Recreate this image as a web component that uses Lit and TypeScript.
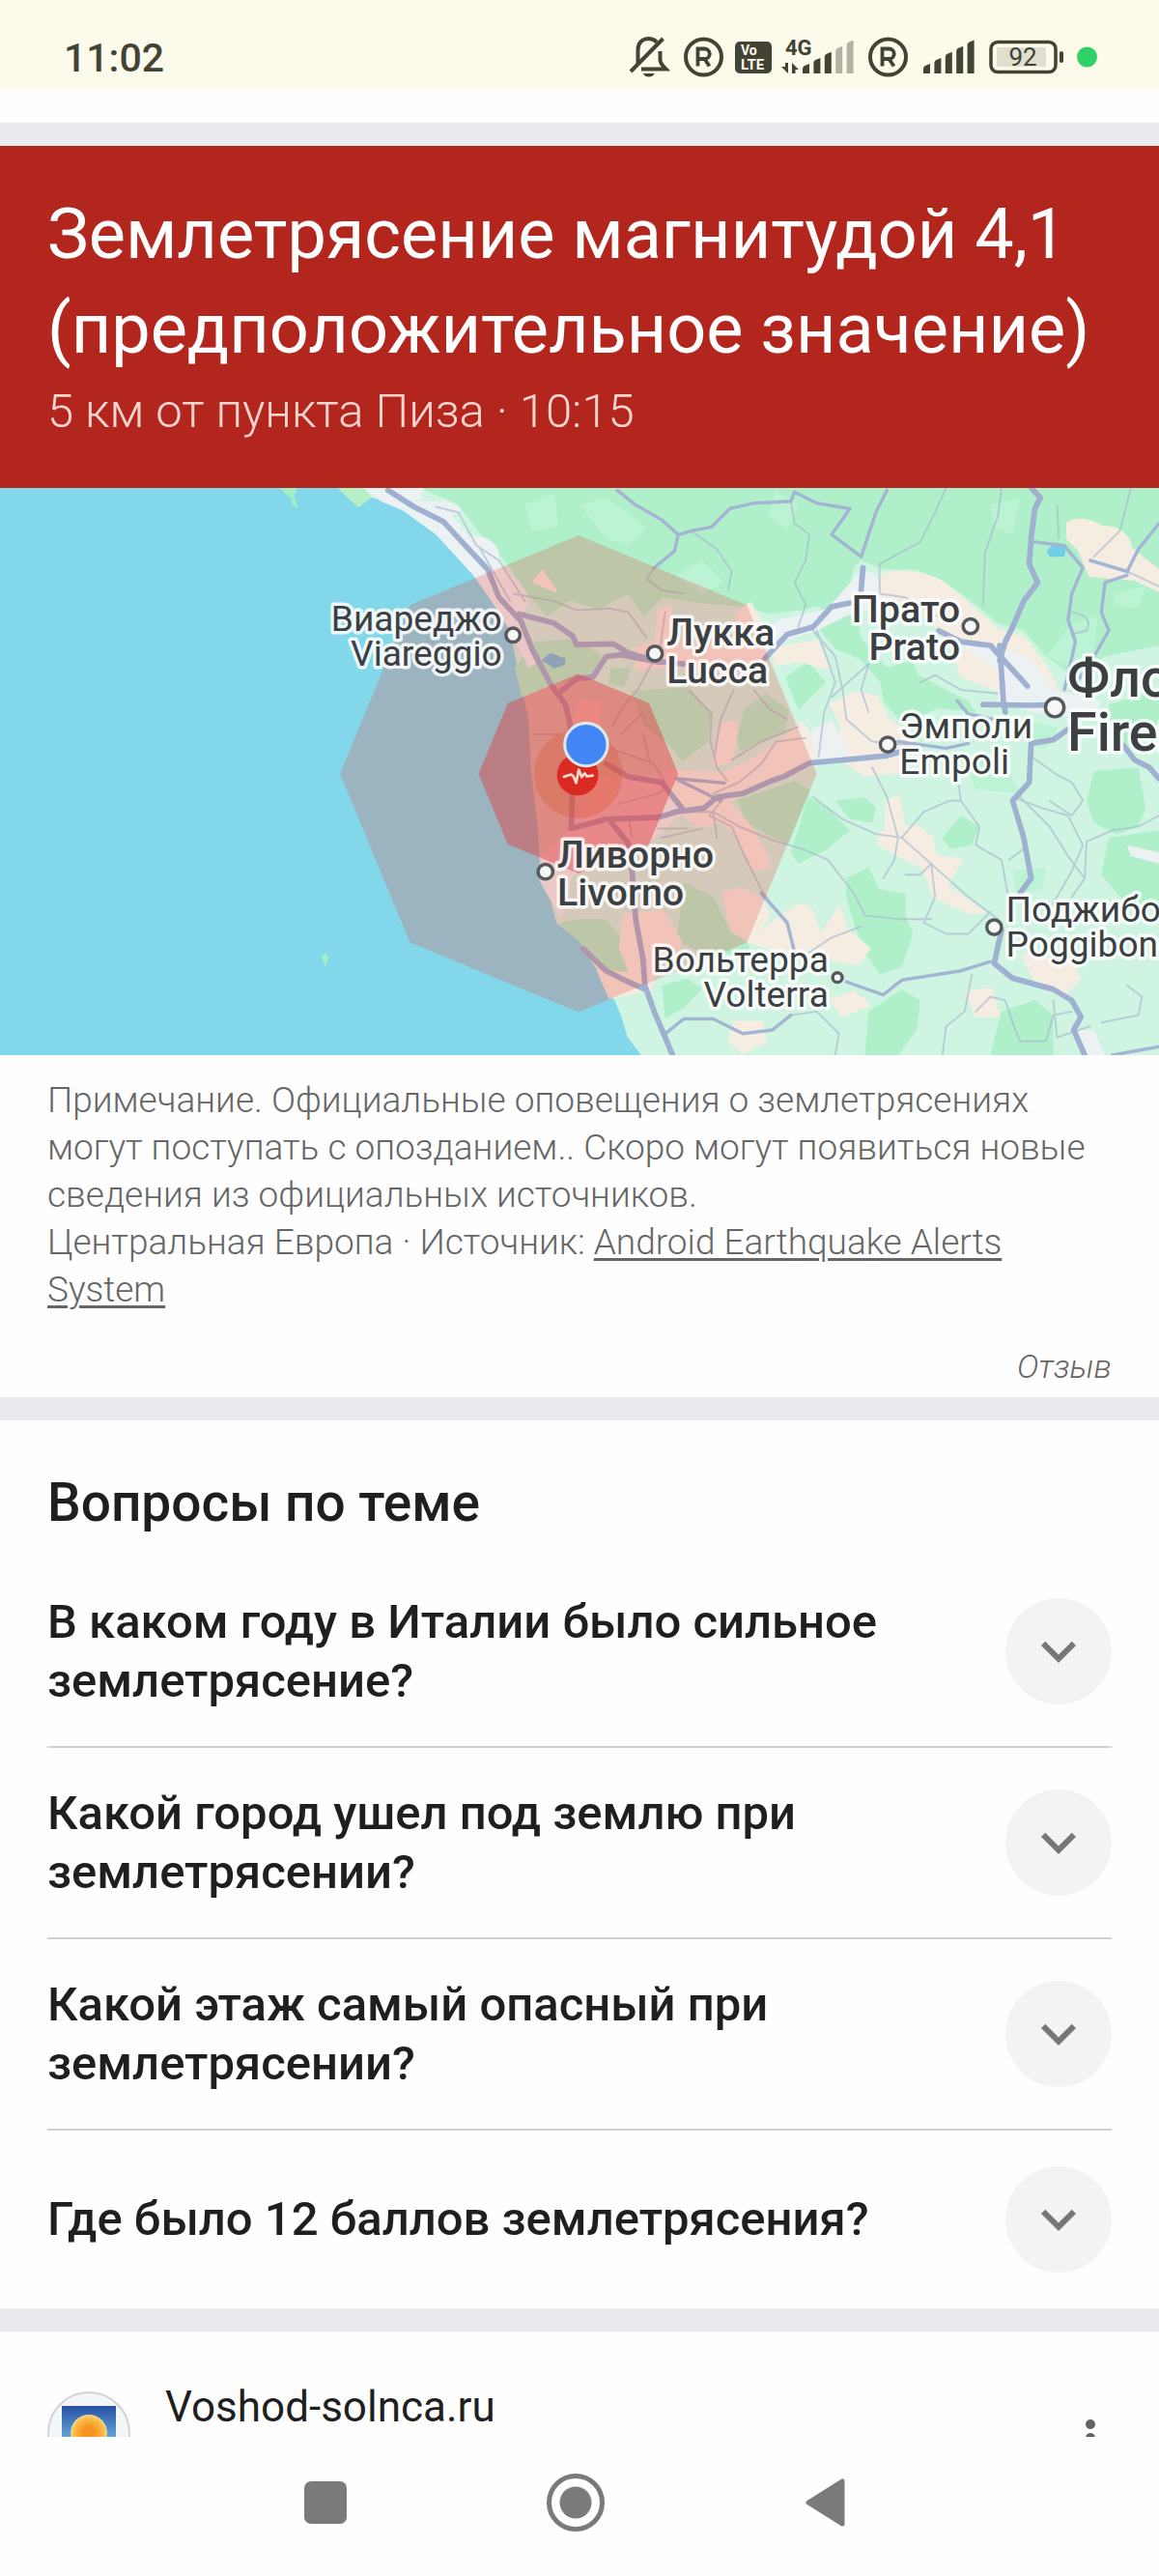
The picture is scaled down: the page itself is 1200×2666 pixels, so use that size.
import { LitElement, html, svg, css } from "lit";
import { customElement, property, state } from "lit/decorators.js";

/* ---------- Status bar ---------- */

@customElement("status-bar")
class StatusBar extends LitElement {
  static styles = css`
    :host {
      display: flex;
      align-items: center;
      justify-content: space-between;
      height: 93px;
      padding: 23px 64px 0 66px;
      box-sizing: border-box;
      background: #fcfaeb;
      color: #424235;
      font-family: Roboto, "Liberation Sans", sans-serif;
    }
    .time {
      padding-top: 3px;
      font-size: 41px;
      line-height: 48px;
      font-weight: 500;
    }
    .icons {
      display: flex;
      align-items: center;
    }
    .tray {
      display: block;
      width: 486px;
      height: 48px;
    }
  `;

  private roaming(cx: number) {
    return svg`
      <circle cx=${cx} cy="24" r="18.5" fill="none" stroke="#424235" stroke-width="4" />
      <path d="M${cx - 6} 33.500V15.500H${cx + 1}A5 5 0 0 1 ${cx + 1} 26H${cx - 6}M${cx + 1} 26L${cx + 6} 33.500"
        fill="none" stroke="#424235" stroke-width="3.800" />`;
  }

  private bars(x: number, faded: number) {
    return [0, 1, 2, 3, 4].map((i) => {
      const left = x + i * 11.4;
      const top = 32 - i * 6.1;
      return svg`<path d="M${left} ${top + 4}Q${left} ${top + 2} ${left + 2} ${top + 1}L${left + 7} ${top - 1}V41H${left}Z"
        fill=${i >= 5 - faded ? "#b3b2a5" : "#424235"} />`;
    });
  }

  render() {
    return html`
      <span class="time">11:02</span>
      <span class="icons">
        <svg class="tray" viewBox="650 -1 486 48" aria-hidden="true">
          <g fill="none" stroke="#424235" stroke-width="4">
            <path d="M660.500 31V16.500C660.500 9 665.500 5 671.500 5C675 5 678 6.500 680 8.500" />
            <path d="M683.500 18V27C683.500 31 688 35 689.500 36.500H664" />
            <path d="M653 39L686.500 5" />
          </g>
          <path d="M666 41H677.500A6 5 0 0 1 666 41Z" fill="#424235" />
          ${this.roaming(728.5)}
          <rect x="761" y="8" width="38" height="33" rx="5" fill="#424235" />
          <g fill="#fcfaeb" font-family="Roboto, sans-serif" font-weight="700">
            <text x="767" y="21.500" font-size="14">Vo</text>
            <text x="767" y="36.500" font-size="15">LTE</text>
          </g>
          <text x="813" y="22" font-size="22" font-weight="700" fill="#424235" font-family="Roboto, sans-serif">4G</text>
          <path d="M813 30L816 30V41L809 34H813ZM820 30V41H823.500V37L827 37Z" fill="#424235" />
          ${this.bars(831, 2)} ${this.roaming(919.5)} ${this.bars(956, 0)}
          <rect x="1026" y="8.500" width="67" height="31" rx="7" fill="none" stroke="#424235" stroke-width="3.500" />
          <rect x="1032" y="14" width="51" height="20" rx="1" fill="#dfdecf" />
          <rect x="1097" y="18" width="4" height="12" rx="2" fill="#424235" />
          <text x="1059" y="33" font-size="26" text-anchor="middle" fill="#424235" font-family="Roboto, sans-serif">92</text>
          <circle cx="1125.500" cy="24" r="10.500" fill="#2fd267" />
        </svg>
      </span>
    `;
  }
}

/* ---------- Map ---------- */

type Place = {
  ru: string;
  local: string;
  x: number;
  y: number;
  end?: boolean;
  size: number;
  weight: number;
  step: number;
  dot: [number, number, number];
};

const PLACES: Place[] = [
  { ru: "Виареджо", local: "Viareggio", x: 1358, y: 400, end: true, size: 97, weight: 400, step: 94, dot: [1388, 412, 19] },
  { ru: "Лукка", local: "Lucca", x: 1804, y: 440, size: 103, weight: 500, step: 103, dot: [1772, 462, 20] },
  { ru: "Прато", local: "Prato", x: 2598, y: 376, end: true, size: 103, weight: 500, step: 104, dot: [2626, 388, 20] },
  { ru: "Флоренция", local: "Firenze", x: 2888, y: 578, size: 145, weight: 500, step: 146, dot: [2854, 608, 25] },
  { ru: "Эмполи", local: "Empoli", x: 2434, y: 692, size: 97, weight: 400, step: 96, dot: [2402, 708, 20] },
  { ru: "Ливорно", local: "Livorno", x: 1508, y: 1040, size: 103, weight: 500, step: 102, dot: [1476, 1052, 20] },
  { ru: "Вольтерра", local: "Volterra", x: 2242, y: 1324, end: true, size: 97, weight: 400, step: 94, dot: [2266, 1338, 13] },
  { ru: "Поджибонси", local: "Poggibonsi", x: 2722, y: 1188, size: 97, weight: 400, step: 94, dot: [2690, 1202, 20] },
];

const LAND =
  "M915 14L925 25L970 66L1005 40L1050 50L1100 80L1180 140L1230 190L1280 245L1330 320L1380 400L1400 500L1415 570L1430 640L1437 780L1455 930L1460 1020L1462 1080L1490 1130L1505 1190L1568 1240L1628 1340L1663 1400L1680 1440L1698 1500L1735 1548H3136V14Z";

const FOREST = [
  "M1140 14L1240 60L1300 140L1370 215L1428 300L1480 361L1541 318L1620 344L1698 300L1742 361L1794 309L1898 326L2020 335L2080 355L2160 345L2240 330L2300 290L2310 230L2330 210L2390 235L2480 235L2560 270L2640 330L2700 380L2770 400L2830 470L2900 520L2990 470L3136 440V14Z",
  "M2220 330L2310 320L2330 420L2400 500L2470 480L2500 560L2440 600L2400 560L2330 480L2260 450L2220 400Z",
  "M2380 520L2450 500L2560 560L2620 590L2640 620L2540 610L2440 650L2390 590Z",
  "M2190 850L2240 880L2300 940L2240 990L2160 1030L2140 1000L2180 870Z",
  "M2260 860L2340 850L2370 880L2360 920L2300 910Z",
  "M1510 1190L1568 1180L1640 1180L1680 1230L1700 1330L1730 1380L1660 1330L1568 1240Z",
  "M1850 1080L1930 1120L1970 1200L2020 1240L2040 1280L1900 1270L1830 1240Z",
  "M2290 1070L2350 1040L2380 1100L2450 1110L2450 1170L2470 1220L2440 1310L2380 1330L2340 1270L2310 1190L2290 1120Z",
  "M2550 960L2600 900L2650 930L2630 980L2570 990Z",
  "M2960 780L3080 770L3100 880L3080 930L3020 950L2960 920L2940 860Z",
  "M3000 960L3136 940V1150L3040 1130L2980 1060Z",
  "M2350 1430L2440 1370L2490 1400L2480 1480L2430 1548H2340Z",
  "M2710 1430L2800 1400L2850 1440L2850 1548H2680Z",
  "M1790 1360L1860 1340L1900 1370L1850 1420L1800 1450Z",
  "M3000 600L3136 560V700L3070 720L3010 680Z",
  "M1445 430L1550 422L1628 466L1602 527L1498 544L1411 579L1393 501Z",
  "M1655 501L1707 501L1690 553L1646 544Z",
  "M1707 562L1864 553L1925 623L1916 701L1846 753L1811 710L1742 658Z",
  "M2012 614L2073 570L2134 614L2125 675L2003 727L1994 692Z",
  "M1994 858L2151 806L2195 832L2170 890L2134 980L2081 954L2020 919Z",
  "M2125 527L2186 483L2235 540L2160 614Z",
];

const SLOPES = [
  "M1568 60L1640 40L1750 120L1700 170L1640 150Z",
  "M1830 250L1900 210L1960 270L1900 300Z",
  "M2100 20L2160 60L2130 130L2080 90Z",
  "M1420 60L1500 30L1510 120L1440 130Z",
  "M2680 60L2760 40L2740 140L2690 120Z",
  "M3010 300L3100 280L3080 340L3020 330Z",
  "M2830 470L2900 380L2970 360L2960 460L2900 500Z",
  "M2760 640L2860 660L2850 700L2820 720L2780 700Z",
  "M2740 1050L2830 1040L2820 1100L2750 1110Z",
  "M2600 740L2720 760L2760 840L2640 830Z",
];

const BEIGE = [
  "M2890 110Q2930 90 2980 120Q3050 120 3060 180L3136 240V290L3070 260L2950 250L2920 180L2890 150Z",
  "M2385 250Q2470 230 2550 270L2620 330L2700 400L2770 420L2830 500L2860 560L2800 590L2700 560L2600 520L2580 440L2480 330L2380 310Z",
  "M2090 450L2210 430L2240 500L2160 480L2100 490Z",
  "M2250 600L2310 570L2370 580L2400 640L2460 680L2440 780L2340 790L2270 740L2280 660Z",
  "M2380 950L2480 930L2520 960L2530 1010L2600 1020L2560 1090L2660 1160L2620 1160L2530 1120L2500 1040L2440 1010L2380 980Z",
  "M2400 860L2430 850L2450 960L2400 960Z",
  "M1960 1110L2010 1100L2060 1130L2080 1170L2030 1240L1980 1210Z",
  "M2120 1170Q2180 1120 2200 1170L2220 1230L2270 1150L2290 1210L2350 1260L2320 1300L2260 1290L2200 1260L2120 1270L2030 1240Z",
  "M1690 1170L1790 1160L1840 1240L1830 1290L1770 1300L1760 1370L1650 1390L1620 1320L1710 1330L1680 1260Z",
  "M2620 1380L2680 1370L2700 1440L2640 1440Z",
  "M2770 1280L2900 1300L2920 1340L2880 1380L2800 1340Z",
  "M1990 1460L2060 1460L2070 1510L2010 1540L1975 1510Z",
  "M2250 1400L2310 1380L2350 1410L2280 1440Z",
  "M1951 658Q1977 640 1994 658L1977 753L1933 762Z",
  "M2020 762L2125 692L2168 649L2203 701L2203 753L2090 797L1994 840L1968 867L2020 919L2064 989L2081 1041L2038 1041L2003 962L1951 910L1898 928L1846 893L1811 780L1951 788Z",
  "M1568 588L1620 597L1620 658L1550 658Z",
  "M1785 344L1811 335L1820 431L2073 440L2064 483L1724 501L1724 449L1776 431Z",
  "M1446 266L1467 241L1502 292Z",
  "M1994 357L2029 327L2073 405L2020 400Z",
];

const URBAN = [
  "M985 14H1145L1140 45L1100 50L1180 50Q1240 50 1245 75L1225 90L1270 145Q1330 140 1350 185L1350 210L1420 290L1430 330L1400 370L1450 490L1430 500L1380 400L1330 320L1280 250L1180 140L1090 75L1030 50Z",
  "M2300 270Q2330 220 2375 255L2390 330L2290 360L2210 400L2080 440L2060 400L2110 370L2240 340Z",
  "M2560 420L2700 440L2790 480L2850 560L2980 590L2960 640L2790 620L2700 590L2700 510L2600 440Z",
  "M1550 780L1707 797L1811 780L1846 893L1776 960L1670 1020L1550 1060L1520 1180L1490 1130L1462 1080L1462 1010L1540 940Z",
  "M2910 1480L2960 1480L2990 1548H2930Z",
  "M3050 980L3136 1000V1030L3060 1010Z",
  "M2195 670L2250 640L2280 700L2300 740L2210 750Z",
];

const MAJOR_ROADS = [
  "M1050 20L1120 65L1200 105L1250 160L1320 235L1350 310L1410 375L1440 450L1490 545L1530 600L1542 650L1555 760L1548 860L1546 930",
  "M1405 355L1500 380L1550 415L1560 438L1660 436L1700 460L1780 484",
  "M1510 570L1560 530L1605 525L1640 470L1680 465L1780 484L1850 490",
  "M1545 935L1640 910L1780 905L1830 890L1905 880L1940 850L2010 840L2090 805L2120 795L2190 758L2300 748L2400 738L2460 720",
  "M1640 760L1700 795L1790 810L1845 880",
  "M1655 920L1700 975L1710 1050L1720 1180L1740 1290L1745 1360L1770 1430L1820 1548",
  "M1578 1260L1640 1320L1700 1350L1745 1370",
  "M2070 475L2130 410L2200 390L2250 335L2300 325",
  "M2330 290L2335 230",
  "M2540 400L2600 430L2680 440L2780 550",
  "M2705 440L2715 590L2720 620",
  "M2790 14L2815 40L2800 70L2790 150L2785 220L2808 270L2770 320L2740 390L2720 430L2705 480",
  "M2660 600L2790 602L2860 600",
  "M2900 660L2850 695L2790 705L2785 810L2740 860L2770 960L2790 1070L2760 1110",
  "M2710 1210L2690 1300L2740 1340L2850 1370L2900 1400L2925 1445L2905 1480L2935 1548",
  "M3040 710L3070 750L3110 770L3136 800",
];

const SECONDARY_ROADS = [
  "M1670 20L1720 60L1790 100L1835 140L1825 185L1770 230",
  "M1840 140L1870 130L1925 120L1975 70L2040 55L2140 50L2150 25L2210 55L2300 70L2250 140L2330 200",
  "M2330 200L2350 140L2370 80L2400 20",
  "M2800 160L2880 170L2930 230L2900 300L2890 370L2910 430L2880 560",
  "M2950 210L3050 240L3080 180L3136 110",
  "M3050 250L2990 270L2980 350L3000 400L2960 470L2900 560",
  "M2590 590L2620 625L2690 640M2430 700L2560 718L2620 705",
  "M2290 1350L2390 1385L2440 1345L2600 1320L2680 1295",
  "M1800 1490L1850 1450L1930 1450L2010 1490L2090 1480L2140 1440",
  "M2060 1110L2130 1190L2150 1270",
  "M3010 1548L3136 1525",
  "M1830 800L1960 812M1835 804L1950 860",
];

const ROADS = [
  "M1770 230L1750 260L1790 290L1850 300",
  "M1870 130L1940 180L1980 240L1970 290",
  "M2140 50L2150 110L2190 140L2180 210L2150 270L2180 330L2160 390",
  "M2560 14L2530 80L2490 160L2380 220L2380 300L2450 310L2550 370",
  "M2710 14L2700 90L2665 190L2660 330",
  "M2860 60L2865 150M3060 14L3030 130L2960 200",
  "M3050 240L3136 280",
  "M2900 350Q2960 360 2940 400L2900 410",
  "M2200 400L2260 470L2280 560L2290 640L2360 700L2460 710",
  "M2210 400L2240 480L2260 540L2230 620L2215 740M2250 580L2350 490L2330 560L2350 620",
  "M2490 540L2530 520L2600 560L2700 570",
  "M2180 690L2100 700L2060 760L2000 810L1930 840M2160 660L2060 700L1980 750",
  "M1865 562L1925 623L1922 700L1940 770L1968 806",
  "M1985 560L1950 640L1933 740M2040 560L2080 610L2130 640",
  "M1800 350L1785 450L1725 560L1690 600",
  "M1390 300L1500 320L1560 345L1650 340L1700 350L1750 420",
  "M1960 850L1920 900L1980 930L2010 1000L2060 1100L2100 1160",
  "M1850 890L1930 890L2000 930L2100 970L2170 990L2240 1020L2310 1110L2340 1170L2430 1180L2520 1180",
  "M2200 850L2280 910L2370 950L2440 960L2530 1040L2620 1120L2700 1180",
  "M2360 770L2400 850L2430 960L2420 1020L2390 1070",
  "M2440 960L2500 890L2570 860L2600 860L2650 930L2640 980L2710 1020L2730 1130",
  "M2600 860L2590 790M2730 1020L2770 990",
  "M2450 1060L2490 1060L2520 1030L2530 1120L2500 1190L2560 1220L2620 1220L2680 1160",
  "M2740 850L2820 880L2890 900L2930 980L2900 1050L2820 1190",
  "M2760 850L2840 930L2890 1010L2935 1070L2900 1120",
  "M2790 740L2860 790L2900 810L2930 860L2900 900L2840 860",
  "M2935 1070L2940 970L3010 940L3080 930L3136 900",
  "M2190 1270L2250 1230L2330 1200",
  "M2630 1330L2610 1430L2560 1470L2550 1548M2640 1430L2680 1390L2720 1400L2740 1460",
  "M2740 1460L2760 1510L2830 1510L2850 1440L2900 1430",
  "M2140 1440L2210 1430L2270 1490L2260 1548",
  "M2850 1400L2860 1500L2950 1470M3050 1360L3090 1390L3080 1440L2980 1460",
  "M1440 680L1510 680M1655 660L1690 600M1680 680L1740 620",
  "M1655 720L1770 760L1800 810M1740 680L1760 760M1670 870L1780 840L1800 830M1700 900L1710 960",
  "M1780 935L1860 935M1790 960L1900 935M1930 890L1940 960",
  "M1180 65L1240 80L1290 170L1350 210L1420 320M1300 180L1380 320",
];

const ISLETS = "M760 14H805L795 35L808 70L790 60L790 45L770 28ZM870 1282L880 1272L890 1285L880 1308Z";

@customElement("quake-map")
class QuakeMap extends LitElement {
  static styles = css`
    :host {
      display: block;
      background: #82d8ea;
    }
    .map {
      display: block;
      width: 100%;
      height: auto;
      font-family: Roboto, "Liberation Sans", sans-serif;
    }
    .label {
      fill: #3c4043;
      stroke: #fff;
      stroke-width: 18px;
      stroke-linejoin: round;
      stroke-opacity: 0.85;
      paint-order: stroke;
    }
    .dot {
      fill: #f6f6f4;
      stroke: #55585c;
      stroke-width: 9px;
    }
  `;

  private octagon(r: number) {
    return Array.from({ length: 8 }, (_, i) => {
      const a = (i * Math.PI) / 4;
      return `${Math.round(1565 + r * Math.cos(a))},${Math.round(787 + r * Math.sin(a))}`;
    }).join(" ");
  }

  private paths(list: string[]) {
    return list.map((d) => svg`<path d=${d} />`);
  }

  render() {
    return html`
      <svg class="map" viewBox="0 14 3136 1534" role="img" aria-label="Пиза">
        <rect y="14" width="3136" height="1534" fill="#82d8ea" />
        <path d=${LAND} fill="#cff5e2" />
        <path d=${ISLETS} fill="#a4eec4" />
        <g fill="#aff0cb">${this.paths(FOREST)}</g>
        <path d="M915 14L925 25L970 66L1005 40L985 14Z" fill="#b4efc6" />
        <g fill="#bbf3d4">${this.paths(SLOPES)}</g>
        <g fill="#f5ede2" stroke="#f5ede2" stroke-width="10" stroke-linejoin="round">${this.paths(BEIGE)}</g>
        <g fill="#ecf1f3">${this.paths(URBAN)}</g>
        <path d="M2832 185L2850 165L2885 175L2880 200L2840 200Z" fill="#72cfe8" />
        <path d="M1465 480L1490 460L1530 475L1528 492L1500 502Z" fill="#72bfe0" />
        <g fill="none" stroke-linejoin="round" stroke-linecap="round">
          <g stroke="#a9b9cf" stroke-width="5" opacity="0.65">${this.paths(ROADS)}</g>
          <g stroke="#a3b5d3" stroke-width="9">${this.paths(SECONDARY_ROADS)}</g>
          <g stroke="#9fb0d0" stroke-width="15">${this.paths(MAJOR_ROADS)}</g>
        </g>
        <polygon points=${this.octagon(645)} fill="#ea4335" fill-opacity="0.24" />
        <polygon points=${this.octagon(270)} fill="#e5393b" fill-opacity="0.44" />
        <circle cx="1565" cy="787" r="120" fill="#d84e1e" fill-opacity="0.26" />
        <circle cx="1563" cy="790" r="56" fill="#d92b24" />
        <path d="M1526 795L1545 789L1552 795L1559 812L1566 776L1574 796L1582 786L1588 794L1604 792"
          fill="none" stroke="#fbd9cf" stroke-width="7" stroke-linejoin="round" stroke-linecap="round" />
        <circle cx="1586" cy="708" r="58" fill="#4285f4" stroke="#dbe9e9" stroke-width="8" />
        ${PLACES.map(
          (p) => svg`
            <circle class="dot" cx=${p.dot[0]} cy=${p.dot[1]} r=${p.dot[2]} />
            <text class="label" x=${p.x} y=${p.y} font-size=${p.size} font-weight=${p.weight}
              text-anchor=${p.end ? "end" : "start"}>${p.ru}</text>
            <text class="label" x=${p.x} y=${p.y + p.step} font-size=${p.size} font-weight=${p.weight}
              text-anchor=${p.end ? "end" : "start"}>${p.local}</text>`
        )}
      </svg>
    `;
  }
}

/* ---------- Expandable question ---------- */

@customElement("faq-row")
class FaqRow extends LitElement {
  @property() text = "";
  @state() private open = false;

  static styles = css`
    :host {
      display: block;
    }
    .row {
      display: flex;
      align-items: center;
      justify-content: space-between;
      gap: 48px;
      width: 100%;
      padding: 37px 0;
      border: 0;
      background: none;
      color: #1f1f1f;
      font: 500 49px/61px Roboto, "Liberation Sans", sans-serif;
      text-align: left;
      cursor: pointer;
    }
    .disc {
      display: flex;
      flex: none;
      align-items: center;
      justify-content: center;
      width: 110px;
      height: 110px;
      border-radius: 50%;
      background: #f1f3f4;
    }
    .chevron {
      width: 72px;
      height: 72px;
      fill: #757677;
    }
  `;

  render() {
    return html`
      <button class="row" aria-expanded=${this.open ? "true" : "false"} @click=${() => (this.open = !this.open)}>
        <span>${this.text}</span>
        <span class="disc">
          <svg class="chevron" viewBox="0 0 24 24" aria-hidden="true">
            <path d="M16.590 8.590L12 13.170L7.410 8.590L6 10l6 6 6-6z" />
          </svg>
        </span>
      </button>
    `;
  }
}

/* ---------- Page ---------- */

const QUESTIONS = [
  "В каком году в Италии было сильное землетрясение?",
  "Какой город ушел под землю при землетрясении?",
  "Какой этаж самый опасный при землетрясении?",
  "Где было 12 баллов землетрясения?",
];

@customElement("app-root")
class AppRoot extends LitElement {
  static styles = css`
    :host {
      display: flex;
      flex-direction: column;
      height: 100vh;
      background: #fefefe;
      color: #1f1f1f;
      font-family: Roboto, "Liberation Sans", sans-serif;
    }
    .scroll {
      flex: 1;
      min-height: 0;
      padding-top: 34px;
      overflow: auto;
      scrollbar-width: none;
    }
    .card {
      border-top: 24px solid #e8eaed;
    }
    .alert {
      padding: 43px 49px 50px;
      background: #b3261e;
      color: #fff;
    }
    .title {
      margin: 0;
      font-size: 72px;
      line-height: 98px;
      font-weight: 400;
    }
    .where {
      margin: 0;
      padding-top: 6px;
      color: #fbd5d0;
      font-size: 49px;
      line-height: 59px;
      font-weight: 300;
    }
    .notes {
      padding: 22px 49px 13px;
      color: #666;
      font-size: 37px;
      line-height: 49px;
      font-weight: 300;
    }
    .notes p {
      margin: 0;
    }
    .notes a {
      color: inherit;
      text-decoration-thickness: 3px;
      text-underline-offset: 4px;
    }
    .feedback {
      display: flex;
      justify-content: flex-end;
      padding-top: 36px;
      font-size: 34px;
      line-height: 38px;
      font-style: italic;
    }
    .notes .feedback a {
      text-decoration: none;
    }
    .faq {
      padding: 0 49px;
    }
    .heading {
      margin: 0;
      padding: 54px 0 24px;
      font-size: 55px;
      line-height: 63px;
      font-weight: 500;
    }
    .questions {
      margin: 0;
      padding: 0;
      list-style: none;
    }
    .questions li + li {
      border-top: 2px solid #d0d1d2;
    }
    .result {
      display: flex;
      align-items: flex-start;
      gap: 36px;
      padding: 54px 49px;
    }
    .favicon {
      flex: none;
      width: 86px;
      height: 86px;
      margin-top: 8px;
    }
    .site {
      flex: 1;
      color: #1f1f1f;
      font-size: 44px;
      line-height: 48px;
      text-decoration: none;
    }
    .more {
      width: 44px;
      height: 60px;
      margin-top: 31px;
      padding: 0;
      border: 0;
      background: none;
    }
    .nav {
      display: flex;
      flex: none;
      align-items: center;
      justify-content: center;
      gap: 199px;
      height: 144px;
      padding: 0 8px 8px 0;
      box-sizing: border-box;
    }
    .key {
      width: 60px;
      height: 60px;
      padding: 0;
      border: 0;
      background: none;
    }
    .glyph {
      display: block;
      overflow: visible;
    }
  `;

  render() {
    return html`
      <status-bar></status-bar>
      <main class="scroll">
        <section class="card">
          <header class="alert">
            <h1 class="title">Землетрясение магнитудой 4,1 (предположительное значение)</h1>
            <p class="where">5 км от пункта Пиза · 10:15</p>
          </header>
          <quake-map></quake-map>
          <div class="notes">
            <p>
              Примечание. Официальные оповещения о землетрясениях могут поступать с опозданием.. Скоро могут появиться
              новые сведения из официальных источников.
            </p>
            <p>Центральная Европа · Источник: <a href="#source">Android Earthquake Alerts System</a></p>
            <div class="feedback"><a href="#feedback">Отзыв</a></div>
          </div>
        </section>

        <section class="card">
          <div class="faq">
            <h2 class="heading">Вопросы по теме</h2>
            <ul class="questions">
              ${QUESTIONS.map((q) => html`<li><faq-row .text=${q}></faq-row></li>`)}
            </ul>
          </div>
        </section>

        <section class="card">
          <div class="result">
            <svg class="favicon" viewBox="0 0 86 86" aria-hidden="true">
              <defs>
                <linearGradient id="sky" x1="0" y1="0" x2="0" y2="1">
                  <stop offset="0" stop-color="#2850a4" />
                  <stop offset="0.6" stop-color="#64a8dc" />
                  <stop offset="1" stop-color="#8cc8ec" />
                </linearGradient>
                <radialGradient id="sun">
                  <stop offset="0.3" stop-color="#f7931e" />
                  <stop offset="0.85" stop-color="#fbc04e" />
                  <stop offset="1" stop-color="#e9dc9a" />
                </radialGradient>
              </defs>
              <circle cx="43" cy="43" r="42" fill="#f3f6f7" stroke="#d2d3d4" stroke-width="2" />
              <rect x="15" y="15" width="56" height="56" fill="url(#sky)" />
              <circle cx="43" cy="43" r="19" fill="url(#sun)" />
            </svg>
            <a class="site" href="#voshod-solnca">Voshod-solnca.ru</a>
            <button class="more" aria-label="Ещё">
              <svg class="glyph" width="44" height="60" viewBox="0 0 44 60" aria-hidden="true">
                <g fill="#5f6163">
                  <circle cx="22" cy="11" r="5" />
                  <circle cx="22" cy="25" r="5" />
                  <circle cx="22" cy="39" r="5" />
                </g>
              </svg>
            </button>
          </div>
        </section>
      </main>

      <nav class="nav">
        <button class="key" aria-label="Недавние">
          <svg class="glyph" width="60" height="60" viewBox="0 0 60 60" aria-hidden="true">
            <rect x="8" y="8" width="44" height="44" rx="7" fill="#7a7a7a" />
          </svg>
        </button>
        <button class="key" aria-label="Домой">
          <svg class="glyph" width="60" height="60" viewBox="0 0 60 60" aria-hidden="true">
            <circle cx="30" cy="30" r="27.500" fill="none" stroke="#7a7a7a" stroke-width="5" />
            <circle cx="30" cy="30" r="16.500" fill="#7a7a7a" />
          </svg>
        </button>
        <button class="key" aria-label="Назад">
          <svg class="glyph" width="60" height="60" viewBox="0 0 60 60" aria-hidden="true">
            <path d="M12 30L47 8V52Z" fill="#7a7a7a" stroke="#7a7a7a" stroke-width="5" stroke-linejoin="round" />
          </svg>
        </button>
      </nav>
    `;
  }
}
